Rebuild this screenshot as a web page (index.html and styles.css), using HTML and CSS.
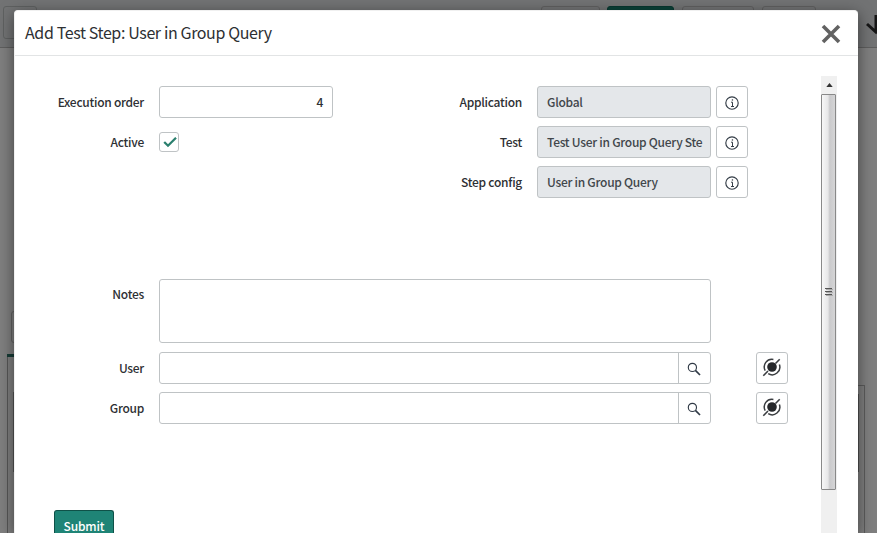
FILE: index.html
```html
<!DOCTYPE html>
<html lang="en">
<head>
<meta charset="utf-8">
<title>Add Test Step</title>
<link rel="stylesheet" href="styles.css">
</head>
<body>
<svg class="defs" aria-hidden="true">
  <symbol id="info" viewBox="0 0 16 16"><circle cx="8" cy="8" r="6.2" fill="none" stroke="#343d47" stroke-width="1.15"/><path d="M7 7.2H8.5V11.5M7 11.5H10" fill="none" stroke="#343d47" stroke-width="1"/><rect x="7.8" y="4.3" width="1.3" height="1.3" fill="#343d47"/></symbol>
  <symbol id="search" viewBox="0 0 16 16"><circle cx="6.4" cy="6.4" r="4.1" fill="none" stroke="#303a46" stroke-width="1.15"/><path d="M9.4 9.4L14 14" stroke="#303a46" stroke-width="1.7"/></symbol>
  <symbol id="map" viewBox="0 0 20 20"><circle cx="10" cy="10" r="4.8" fill="#26282b"/><path d="M3.2 13.6A7.7 7.7 0 0 1 11.4 2.4M17.4 7.6A7.7 7.7 0 0 1 6.2 16.7" fill="none" stroke="#3a3d40" stroke-width="1.5"/><path d="M1.3 18.7L6 14M13.5 6.5L17.7 2.3" stroke="#3a3d40" stroke-width="1.6"/></symbol>
</svg>
<div class="page">
  <div class="toolbar">
    <span class="back"></span>
    <span class="tool t1"></span><span class="tool t2"></span><span class="tool t3"></span><span class="tool t4"></span>
    <svg class="arrow" width="18" height="20" viewBox="0 0 18 20"><path d="M11 0V17M2 9L11 17L18 9" fill="none" stroke="#161616" stroke-width="3"/></svg>
  </div>
  <div class="backdrop-field"></div>
  <div class="tab-line"></div>
  <div class="panel-row"><div class="left-panel"><i></i></div><div class="right-panel"><i></i></div></div>
</div>
<main class="modal">
  <header class="head">
    <h1>Add Test Step: User in Group Query</h1>
    <svg width="20" height="20" viewBox="0 0 20 20"><path d="M2 2L18 18M18 2L2 18" stroke="#626262" stroke-width="3.6"/></svg>
  </header>
  <div class="body">
    <form class="form">
      <div class="columns">
        <div class="left">
          <div class="row"><label>Execution order</label><div class="field number">4</div></div>
          <div class="row"><label>Active</label><div class="check"><svg width="14" height="12" viewBox="0 0 14 12"><path d="M1.2 6L5 9.7L13 1.8" fill="none" stroke="#2c806f" stroke-width="2.3"/></svg></div></div>
        </div>
        <div class="right">
          <div class="row"><label>Application</label><div class="field locked">Global</div><div class="button"><svg width="16" height="16"><use href="#info"/></svg></div></div>
          <div class="row"><label>Test</label><div class="field locked">Test User in Group Query Ste</div><div class="button"><svg width="16" height="16"><use href="#info"/></svg></div></div>
          <div class="row"><label>Step config</label><div class="field locked">User in Group Query</div><div class="button"><svg width="16" height="16"><use href="#info"/></svg></div></div>
        </div>
      </div>
      <div class="row notes"><label>Notes</label><div class="field area"></div></div>
      <div class="row lookup"><label>User</label><div class="field wide"><div class="find"><svg width="16" height="16"><use href="#search"/></svg></div></div><div class="button map"><svg width="20" height="20"><use href="#map"/></svg></div></div>
      <div class="row lookup"><label>Group</label><div class="field wide"><div class="find"><svg width="16" height="16"><use href="#search"/></svg></div></div><div class="button map"><svg width="20" height="20"><use href="#map"/></svg></div></div>
      <div class="submit">Submit</div>
    </form>
    <div class="scroll">
      <div class="up"><svg width="7" height="4" viewBox="0 0 8 5"><path d="M0 5L4 0L8 5Z" fill="#333"/></svg></div>
      <div class="thumb"><svg width="8" height="10" viewBox="0 0 8 10"><path d="M0 1.5H7M0 4.5H7M0 7.5H7" stroke="#555"/><path d="M1 2.5H8M1 5.5H8M1 8.5H8" stroke="#aaa"/></svg></div>
    </div>
  </div>
</main>
</body>
</html>
```
FILE: styles.css
```css
* { box-sizing: border-box; }
body { margin: 0; width: 877px; height: 533px; overflow: hidden; background: #7f7f7f; color: #2e3033; font: 500 12px/20px "Noto Sans CJK SC", "Noto Sans", sans-serif; letter-spacing: -.27px; }
svg { display: block; flex: none; }
.defs { position: absolute; width: 0; height: 0; }
.page { height: 533px; overflow: hidden; }
.toolbar { display: flex; height: 48px; padding-top: 6px; background: #727374; border-bottom: 1px solid #5e5e5e; overflow: hidden; }
.toolbar > * { flex: none; }
.back { width: 34px; height: 33px; margin-left: 3px; border: 1px solid #5f6161; border-radius: 3px; }
.tool { height: 32px; border: 1px solid #606060; border-radius: 3px; }
.t1 { width: 59px; margin-left: 504px; }
.t2 { width: 67px; margin-left: 7px; background: #0b4138; border-color: #08372f; }
.t3 { width: 72px; margin-left: 8px; }
.t4 { width: 54px; margin-left: 8px; }
.arrow { margin: 9px 0 0 49px; }
.backdrop-field { width: 30px; height: 32px; margin: 263px 0 0 11px; border: 1px solid #626262; border-radius: 3px; }
.tab-line { width: 30px; height: 3px; margin: 11px 0 0 7px; background: #173c36; }
.panel-row { display: flex; justify-content: space-between; height: 176px; padding: 0 12px 0 7px; overflow: hidden; }
.left-panel { width: 30px; height: 176px; border-left: 1px solid #575757; padding: 35px 0 0 5px; }
.left-panel i { display: block; height: 80px; border-left: 1px solid #555; }
.right-panel { width: 20px; height: 148px; margin-top: 28px; border: 1px solid #5c5c5c; border-bottom: 0; padding: 8px 0 0 12px; }
.right-panel i { display: block; width: 1px; height: 78px; background: #505050; }
.modal { position: absolute; left: 14px; top: 10px; width: 844px; height: 523px; overflow: hidden; border: 1px solid #f0f0f0; border-width: 1px 0 0 1px; border-radius: 4px 4px 0 0; background: #fff; box-shadow: 0 4px 15px rgba(0,0,0,.5); }
.head { display: flex; justify-content: space-between; height: 45px; padding: 13px 17px 0 10px; border-bottom: 1px solid #e2e4e5; }
h1 { margin: -2px 0 0; font-size: 16px; line-height: 20px; font-weight: 400; letter-spacing: -.38px; white-space: nowrap; }
.body { display: flex; height: 477px; padding-top: 20px; }
.form { width: 806px; height: 457px; padding-top: 10px; }
.columns { display: flex; height: 193px; }
.left { width: 378px; }
.row { display: flex; height: 40px; }
label { width: 129px; margin-right: 15px; padding-top: 6px; text-align: right; white-space: nowrap; }
.field { width: 174px; height: 32px; padding: 5px 9px; border: 1px solid #bfc3c5; border-radius: 3px; white-space: nowrap; background: #fff; }
.number { text-align: right; }
.locked { background: #e4e7ea; color: #41464b; }
.check { display: flex; align-items: center; justify-content: center; width: 20px; height: 20px; margin-top: 6px; border: 1px solid #bfc3c5; border-radius: 3px; padding-left: 1px; }
.button { display: flex; align-items: center; justify-content: center; width: 32px; height: 32px; margin-left: 5px; border: 1px solid #bfc3c5; border-radius: 3px; }
.right .button { padding-top: 2px; }
.notes { height: 73px; }
.notes label { padding-top: 5px; }
.area { width: 552px; height: 64px; }
.wide { display: flex; justify-content: flex-end; width: 552px; padding: 0; }
.find { display: flex; align-items: center; justify-content: center; width: 32px; border-left: 1px solid #bfc3c5; padding: 2px 1px 0 0; }
.map { margin-left: 45px; padding-bottom: 2px; }
.submit { width: 60px; height: 23px; margin: 78px 0 0 39px; border: 1px solid #0f5148; border-bottom: 0; border-radius: 3px 3px 0 0; padding-top: 5px; background: #1f8476; color: #fff; text-align: center; letter-spacing: -.15px; line-height: 20px; }
.scroll { width: 16px; height: 457px; background: #f0f0f0; }
.up { display: flex; justify-content: center; align-items: center; height: 18px; }
.thumb { display: flex; justify-content: center; align-items: center; width: 15px; height: 396px; border: 1px solid #898989; border-radius: 1px; background: linear-gradient(90deg, #f7f7f7, #e7e7e8 45%, #cacacc 60%, #d5d5d6); }
```
